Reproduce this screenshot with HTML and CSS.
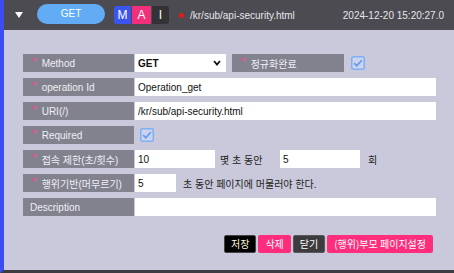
FILE: index.html
```html
<!DOCTYPE html>
<html>
<head>
    <title>API 설정</title>
    <link rel="stylesheet" href="styles.css">
</head>
<body>
    <div class="window">
        <div class="header">
            <svg class="toggle" width="8" height="6" viewBox="0 0 8 6"><polygon points="0,0 8,0 4,6" fill="#fff"/></svg>
            <span class="method-pill">GET</span>
            <div class="flags">
                <span class="flag flag-m">M</span>
                <span class="flag flag-a">A</span>
                <span class="flag flag-i">I</span>
            </div>
            <span class="dot"></span>
            <span class="path">/kr/sub/api-security.html</span>
            <span class="date">2024-12-20 15:20:27.0</span>
        </div>

        <div class="form">
            <div class="row">
                <div class="label"><span class="req">*</span>Method</div>
                <div class="select">
                    <span>GET</span>
                    <svg width="8" height="6" viewBox="0 0 8 6"><polyline points="1,1 4,4.5 7,1" fill="none" stroke="#111" stroke-width="1.8"/></svg>
                </div>
                <div class="label label-side"><span class="req">*</span>정규화완료</div>
                <svg class="check" width="14" height="14" viewBox="0 0 14 14"><rect x="0.75" y="0.75" width="12.5" height="12.5" rx="2" fill="#cdd3ef" stroke="#7eaff2" stroke-width="1.5"/><polyline points="3.2,7.2 5.8,9.8 10.8,4.2" fill="none" stroke="#5b9bef" stroke-width="1.7"/></svg>
            </div>
            <div class="row">
                <div class="label"><span class="req">*</span>operation Id</div>
                <input class="field" type="text" value="Operation_get">
            </div>
            <div class="row">
                <div class="label"><span class="req">*</span>URI(/)</div>
                <input class="field" type="text" value="/kr/sub/api-security.html">
            </div>
            <div class="row">
                <div class="label"><span class="req">*</span>Required</div>
                <svg class="check check-solo" width="14" height="14" viewBox="0 0 14 14"><rect x="0.75" y="0.75" width="12.5" height="12.5" rx="2" fill="#cdd3ef" stroke="#7eaff2" stroke-width="1.5"/><polyline points="3.2,7.2 5.8,9.8 10.8,4.2" fill="none" stroke="#5b9bef" stroke-width="1.7"/></svg>
            </div>
            <div class="row">
                <div class="label"><span class="req">*</span>접속 제한(초/횟수)</div>
                <input class="field field-num" type="text" value="10">
                <span class="unit unit-wide">몇 초 동안</span>
                <input class="field field-num" type="text" value="5">
                <span class="unit">회</span>
            </div>
            <div class="row">
                <div class="label"><span class="req">*</span>행위기반(머무르기)</div>
                <input class="field field-short" type="text" value="5">
                <span class="unit unit-long">초 동안 페이지에 머물러야 한다.</span>
            </div>
            <div class="row">
                <div class="label label-plain">Description</div>
                <input class="field" type="text" value="">
            </div>
        </div>

        <div class="actions">
            <button class="btn btn-save">저장</button>
            <button class="btn btn-pink">삭제</button>
            <button class="btn btn-close">닫기</button>
            <button class="btn btn-pink">(행위)부모 페이지설정</button>
        </div>
    </div>
</body>
</html>
```

FILE: styles.css
```css
body {
    margin: 0;
    font-family: 'Liberation Sans', 'Noto Sans CJK KR', sans-serif;
}
.window {
    width: 454px;
    height: 273px;
    box-sizing: border-box;
    background-color: #c9c9db;
    border-left: 4px solid #3b4cf2;
    border-bottom: 3px solid #3c3c42;
}
.header {
    height: 30px;
    background-color: #4b4b51;
    display: flex;
    align-items: center;
    padding: 0 10px 0 11px;
    color: #e6e6ea;
    font-size: 10px;
}
.toggle {
    flex: none;
}
.method-pill {
    width: 68px;
    height: 20px;
    margin-left: 14px;
    margin-top: -2px;
    border-radius: 10px;
    background-color: #62acf5;
    color: white;
    font-size: 10px;
    line-height: 20px;
    text-align: center;
}
.flags {
    display: flex;
    margin-left: 9px;
}
.flag {
    height: 18px;
    line-height: 18px;
    text-align: center;
    color: white;
    font-size: 12px;
    font-family: 'Liberation Sans', sans-serif;
}
.flag-m {
    width: 17px;
    background-color: #3d55f0;
    border-radius: 3px 0 0 3px;
}
.flag-a {
    width: 19px;
    background-color: #f0307a;
    margin-left: 1px;
}
.flag-i {
    width: 17px;
    background-color: #333336;
    margin-left: 1px;
    border-radius: 0 3px 3px 0;
}
.dot {
    width: 5px;
    height: 5px;
    border-radius: 50%;
    background-color: #e31b1b;
    margin-left: 10px;
}
.path {
    margin-left: 6px;
}
.date {
    margin-left: auto;
}
.form {
    padding: 24px 18px 0 19px;
    display: flex;
    flex-direction: column;
    gap: 6px;
}
.row {
    display: flex;
    align-items: center;
    height: 18px;
    font-size: 10px;
    color: #222;
}
.label {
    width: 111px;
    height: 18px;
    box-sizing: border-box;
    flex: none;
    display: flex;
    align-items: center;
    padding-left: 9px;
    margin-right: 1px;
    background-color: #82828f;
    color: #efeff5;
    font-size: 10px;
}
.label-side {
    width: 112px;
    margin-left: 6px;
}
.label-plain {
    padding-left: 7px;
}
.req {
    align-self: flex-start;
    margin-top: 2px;
    margin-right: 5px;
    color: #f74c8e;
    font-size: 12px;
    line-height: 12px;
}
.select {
    width: 91px;
    height: 18px;
    box-sizing: border-box;
    display: flex;
    align-items: center;
    justify-content: space-between;
    padding: 0 5px 0 3px;
    background: white;
    font-weight: bold;
    color: #111;
}
.check {
    margin-left: 6px;
}
.check-solo {
    margin-left: 5px;
}
.field {
    height: 18px;
    width: 301px;
    box-sizing: border-box;
    border: none;
    outline: none;
    padding: 0 3px;
    margin: 0;
    font-family: 'Liberation Sans', 'Noto Sans CJK KR', sans-serif;
    font-size: 10px;
    color: #111;
    background: white;
}
.field-num {
    width: 80px;
}
.field-short {
    width: 41px;
}
.unit {
    margin-left: 8px;
}
.unit-wide {
    width: 60px;
    margin-left: 5px;
}
.unit-long {
    margin-left: 7px;
}
.actions {
    display: flex;
    justify-content: flex-end;
    gap: 2px;
    padding: 19px 21px 0 0;
}
.btn {
    height: 18px;
    padding: 0 6px;
    border: 1px solid transparent;
    border-radius: 2px;
    font-family: 'Noto Sans CJK KR', sans-serif;
    font-size: 10px;
    line-height: 16px;
    color: white;
    cursor: pointer;
}
.btn-save {
    background-color: #000;
    border-color: #444;
    color: #fff6dc;
}
.btn-pink {
    background-color: #ff2d7c;
}
.btn-close {
    background-color: #3c3c3e;
    border-color: #5a5a5e;
}
```
